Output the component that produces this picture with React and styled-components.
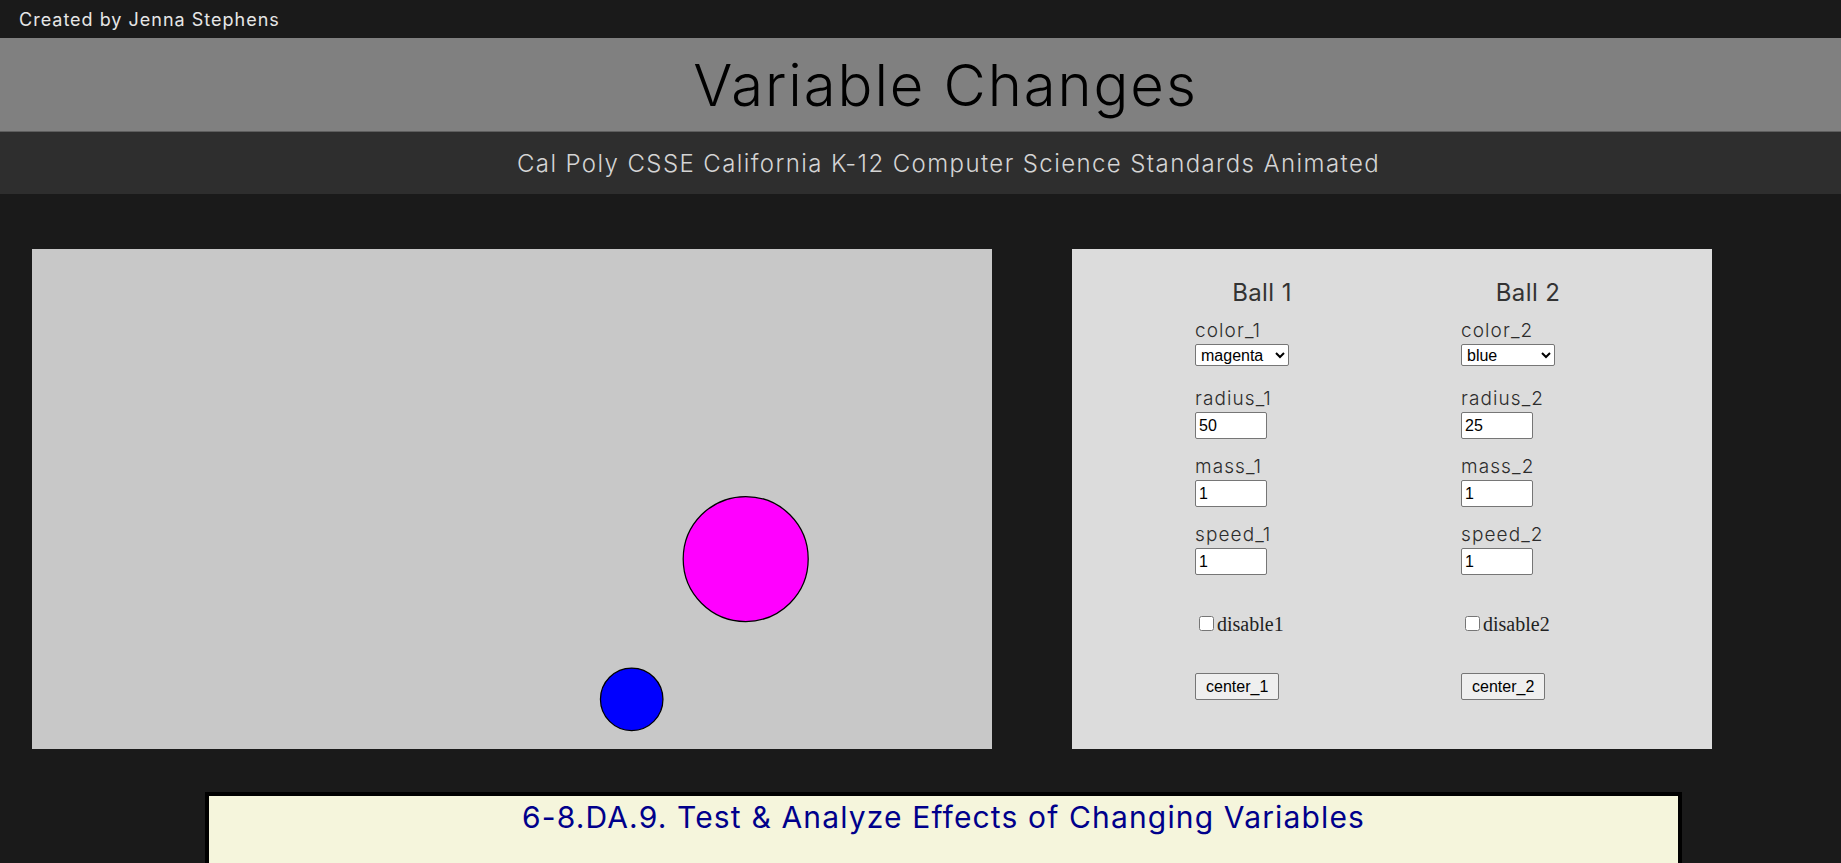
import React from "react";
import styled, { createGlobalStyle } from "styled-components";

const Global = createGlobalStyle`
  html, body { margin: 0; padding: 0; background: #1a1a1a; }
  body { font-family: "Inter", "Noto Sans", sans-serif; overflow: hidden; }
`;

const Page = styled.div`
  width: 1841px;
  min-height: 863px;
  background: #1a1a1a;
`;

const TopBar = styled.div`
  height: 38px;
  padding-left: 19px;
  display: flex;
  align-items: center;
  color: #e6e6e6;
  font-size: 18px;
  font-weight: 400;
  letter-spacing: 1px;
`;

const TitleBar = styled.header`
  height: 94px;
  box-sizing: border-box;
  padding-left: 50px;
  background: #808080;
  border-bottom: 1px solid #5e5e5e;
  display: flex;
  align-items: center;
  justify-content: center;
`;

const Title = styled.h1`
  margin: 0;
  font-size: 58px;
  font-weight: 300;
  color: #000;
  letter-spacing: 1.9px;
`;

const SubBar = styled.div`
  height: 62px;
  box-sizing: border-box;
  padding-left: 56px;
  background: #2e2e2e;
  display: flex;
  align-items: center;
  justify-content: center;
  color: #d4d4d4;
  font-size: 24px;
  font-weight: 300;
  letter-spacing: 1.4px;
`;

const Main = styled.main`
  display: flex;
  align-items: flex-start;
  gap: 80px;
  padding: 55px 0 0 32px;
`;

const Stage = styled.div`
  width: 960px;
  height: 500px;
  background: #c8c8c8;
  flex: none;
`;

const Panel = styled.section`
  width: 640px;
  height: 500px;
  box-sizing: border-box;
  background: #dcdcdc;
  padding: 29px 0 0 123px;
  display: grid;
  grid-template-columns: 134px 134px;
  column-gap: 132px;
  align-content: start;
  color: #333;
`;

const Column = styled.div`
  display: flex;
  flex-direction: column;
`;

const BallHeading = styled.h2`
  margin: 0 0 9px 0;
  font-size: 24px;
  line-height: 30px;
  font-weight: 400;
  text-align: center;
  letter-spacing: 0.4px;
`;

const Field = styled.div`
  height: 68px;
  display: flex;
  flex-direction: column;
  align-items: flex-start;
`;

const Label = styled.label`
  font-size: 19px;
  line-height: 27px;
  font-weight: 300;
  letter-spacing: 1.1px;
  color: #2c2c2c;
`;

const Select = styled.select`
  width: 94px;
  height: 22px;
  font-family: "Liberation Sans", Arial, sans-serif;
  font-size: 16px;
  color: #000;
  background: #fff;
  border: 1px solid #767676;
  border-radius: 2px;
  padding: 0 1px;
  margin: 0;
`;

const NumInput = styled.input`
  width: 72px;
  height: 27px;
  box-sizing: border-box;
  font-family: "Liberation Sans", Arial, sans-serif;
  font-size: 16px;
  color: #000;
  background: #fff;
  border: 1px solid #767676;
  border-radius: 2px;
  padding: 1px 3px;
  margin: 0;
`;

const CheckRow = styled.div`
  margin-top: 23px;
  font-family: "Liberation Serif", "Times New Roman", serif;
  font-size: 20px;
  line-height: 24px;
  color: #222;
`;

const Check = styled.input`
  width: 15px;
  height: 15px;
  margin: 0 3px 1px 4px;
  vertical-align: baseline;
`;

const CenterButton = styled.button`
  align-self: flex-start;
  margin-top: 37px;
  height: 27px;
  box-sizing: border-box;
  padding: 0 10px;
  font-family: "Liberation Sans", Arial, sans-serif;
  font-size: 16px;
  color: #000;
  background: #efefef;
  border: 1px solid #767676;
  border-radius: 2px;
`;

const StandardBox = styled.section`
  margin: 43px 0 0 205px;
  width: 1477px;
  height: 200px;
  box-sizing: border-box;
  background: #f5f5dc;
  border: 4px solid #000;
  text-align: center;
`;

const StandardTitle = styled.h3`
  margin: 0;
  padding-top: 1px;
  font-size: 30px;
  line-height: 40px;
  font-weight: 400;
  color: #00008b;
  letter-spacing: 1.15px;
`;

const colors = ["magenta", "blue", "red", "green", "yellow", "cyan", "black"];

function BallControls({ n, color, radius }) {
  return (
    <Column>
      <BallHeading>Ball {n}</BallHeading>
      <Field>
        <Label>color_{n}</Label>
        <Select defaultValue={color}>
          {colors.map((c) => (
            <option key={c} value={c}>{c}</option>
          ))}
        </Select>
      </Field>
      <Field>
        <Label>radius_{n}</Label>
        <NumInput type="text" defaultValue={radius} />
      </Field>
      <Field>
        <Label>mass_{n}</Label>
        <NumInput type="text" defaultValue="1" />
      </Field>
      <Field>
        <Label>speed_{n}</Label>
        <NumInput type="text" defaultValue="1" />
      </Field>
      <CheckRow>
        <Check type="checkbox" />disable{n}
      </CheckRow>
      <CenterButton>center_{n}</CenterButton>
    </Column>
  );
}

export default function App() {
  return (
    <Page>
      <Global />
      <TopBar>Created by Jenna Stephens</TopBar>
      <TitleBar>
        <Title>Variable Changes</Title>
      </TitleBar>
      <SubBar>Cal Poly CSSE California K-12 Computer Science Standards Animated</SubBar>
      <Main>
        <Stage>
          <svg width="960" height="500" viewBox="0 0 960 500">
            <circle cx="713.7" cy="310" r="62.5" fill="#ff00ff" stroke="#000" strokeWidth="1.25" />
            <circle cx="599.7" cy="450.3" r="31.25" fill="#0000ff" stroke="#000" strokeWidth="1.25" />
          </svg>
        </Stage>
        <Panel>
          <BallControls n={1} color="magenta" radius="50" />
          <BallControls n={2} color="blue" radius="25" />
        </Panel>
      </Main>
      <StandardBox>
        <StandardTitle>6-8.DA.9. Test &amp; Analyze Effects of Changing Variables</StandardTitle>
      </StandardBox>
    </Page>
  );
}
